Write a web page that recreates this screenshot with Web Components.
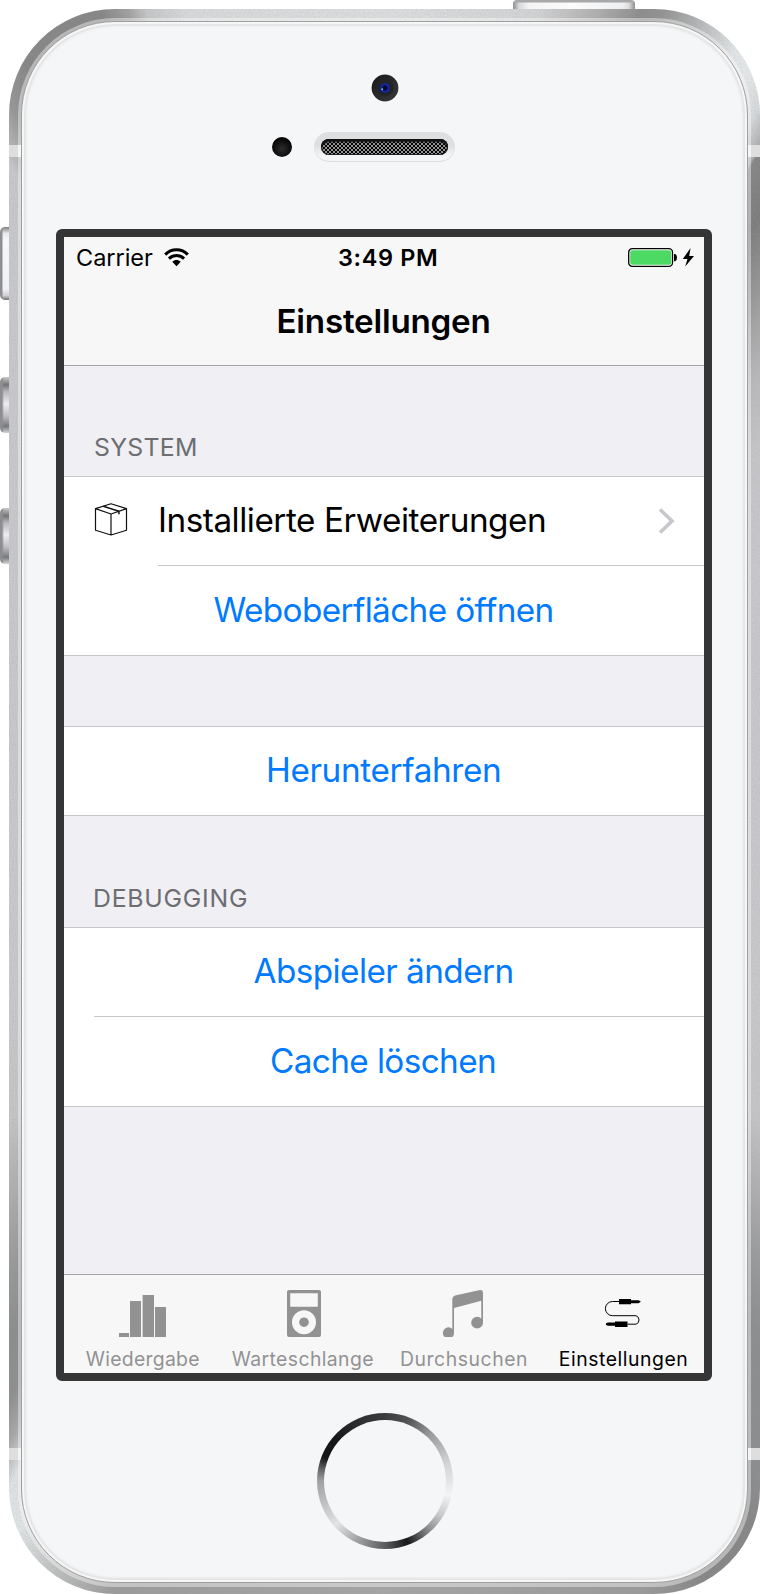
<!DOCTYPE html>
<html lang="de">
<head>
<meta charset="utf-8">
<title>Einstellungen</title>
<style>
html,body{margin:0;background:#fff}
body{width:760px;height:1594px;overflow:hidden;font-family:Inter,"Noto Sans",sans-serif}
</style>
</head>
<body>
<phone-shell>
  <phone-screen>
    <status-bar></status-bar>
    <nav-bar><fit-text width="211">Einstellungen</fit-text></nav-bar>
    <settings-group style="--head:110px">
      <fit-text slot="label" width="101">SYSTEM</fit-text>
      <settings-row kind="link"><fit-text width="385">Installierte Erweiterungen</fit-text></settings-row>
      <settings-row kind="action" style="--inset:94px;--row:90px;--drop:2px;--trim:2px"><fit-text width="339">Weboberfläche öffnen</fit-text></settings-row>
    </settings-group>
    <settings-group style="--head:70px">
      <settings-row kind="action"><fit-text width="232">Herunterfahren</fit-text></settings-row>
    </settings-group>
    <settings-group style="--head:111px">
      <fit-text slot="label" width="151">DEBUGGING</fit-text>
      <settings-row kind="action" style="--trim:2px"><fit-text width="259">Abspieler ändern</fit-text></settings-row>
      <settings-row kind="action" style="--inset:30px;--row:90px;--drop:2px;--trim:2px"><fit-text width="224">Cache löschen</fit-text></settings-row>
    </settings-group>
    <tab-bar slot="tabs">
      <tab-item icon="bars" style="--trim:3px"><fit-text width="113.5">Wiedergabe</fit-text></tab-item>
      <tab-item icon="player" style="--trim:3px"><fit-text width="141.5">Warteschlange</fit-text></tab-item>
      <tab-item icon="note" style="--trim:1px"><fit-text width="125">Durchsuchen</fit-text></tab-item>
      <tab-item icon="cable" style="--trim:2px" active><fit-text width="126.5">Einstellungen</fit-text></tab-item>
    </tab-bar>
  </phone-screen>
</phone-shell>

<script>
class Base extends HTMLElement {
  constructor() {
    super();
    this.attachShadow({ mode: 'open' }).innerHTML = this.template();
  }
  template() { return '<slot></slot>'; }
}

customElements.define('phone-shell', class extends Base {
  template() { return `
  <style>
    :host{display:block;position:relative;width:760px;height:1594px;overflow:hidden;box-sizing:border-box;padding:9px 0 0 9px;background:#fff}
    .body{position:relative;box-sizing:border-box;width:751px;height:1585px;padding:9px 9px 7px;border-radius:106px;overflow:hidden;
      background:conic-gradient(from 0deg at 375.5px 792px,
      #dcddde 0deg,#d2d3d4 11deg,#b0b0b0 15deg,#8c8c8c 18deg,#929292 19.5deg,#b8babb 22.3deg,#e2e5e7 25deg,#e6e9ea 26.6deg,#d6d9db 28.3deg,#acadae 29.8deg,#868686 30deg,#7c7c7c 32.6deg,#8a8a8a 34.5deg,#a5a5a6 38deg,#b9b9bb 41.4deg,#c5c5c8 46.6deg,#c8c8cc 57deg,#c8c8cb 118deg,#c4c4c6 130.4deg,#acacae 136.8deg,#999a9b 140.8deg,#8c8d8f 145deg,#8c8d8f 151deg,#868686 153deg,#868686 157.6deg,#9a9a9a 162deg,#a4a4a4 180deg,#9b9b9b 199deg,#bcbebd 203deg,#e0e4e5 206.6deg,#dee2e4 208.7deg,#bcbdbf 209.7deg,#a8a8aa 210.3deg,#8e8f91 212deg,#8b8c8e 214.8deg,#999a9b 219.2deg,#acacae 223.2deg,#c4c4c6 229.6deg,#c8c8cc 242deg,#c7c7cc 303deg,#c8c8cc 329.5deg,#b0b0b0 330.5deg,#959595 331.8deg,#868686 334deg,#868686 340.3deg,#a0a0a0 342deg,#c4c5c6 343.2deg,#d8d9da 346deg,#dcddde 360deg)}
    .grain{position:absolute;inset:0;width:100%;height:100%}
    .ring{position:relative;box-sizing:border-box;height:100%;padding:3px 3px 4px;border-radius:97px;background:rgba(255,255,255,.4)}
    .face{box-sizing:border-box;height:100%;border:1px solid #9d9fa1;border-radius:94px;background:#f4f6f8;box-shadow:inset 0 0 0 2px #f6f6f7,inset 0 0 0 4px #e6e6e6,inset 0 0 2px 5px #edeef0;
      display:flex;flex-direction:column;align-items:center}
    .top{height:207px;display:flex;flex-direction:column;align-items:center;width:100%}
    .camera{margin:51.5px 0 0}
    .ear{display:flex;margin:30.5px 42px 0 0;gap:22px;align-items:center}
    .sensor{width:20px;height:20px;border-radius:50%;background:radial-gradient(circle at 50% 60%,#2b2b2c,#050505 70%);box-shadow:0 1px 1px #fff}
    .speaker{width:141px;height:30px;border-radius:15px;box-sizing:border-box;padding:7px;background:linear-gradient(#dddfe0 45%,#f4f5f6 80%);box-shadow:inset 0 -1px #dcdddf}
    .mesh{height:16px;border-radius:8px;background:repeating-conic-gradient(#050505 0 25%,#929292 0 50%) 0 0/4px 4px;box-shadow:inset 0 3px 2px #111,inset 0 0 0 1px #222}
    .home{margin-top:32px;width:136px;height:136px;box-sizing:border-box;padding:7px;border-radius:50%;background:conic-gradient(#3b3c3d,#505152 20deg,#9c9c9d 45deg,#d4d5d6 75deg,#e3e4e5 90deg,#f3f4f5 102deg,#c8c9ca 122deg,#8c8d8e 138deg,#171819 160deg,#5b5c5e 180deg,#9b9c9d 203deg,#e2e3e4 228deg,#bfc0c1 250deg,#a0a1a3 270deg,#606163 281deg,#151617 291deg,#151617 310deg,#292a2b 330deg,#3b3c3d)}
    .home i{display:block;height:100%;border-radius:50%;background:#f5f6f8}
    .band{position:absolute;width:12px;height:12px;background:linear-gradient(90deg,#dedede 9px,#f5f5f5 9px)}
    .r{transform:scaleX(-1)}
    .side{position:absolute;left:0;width:9px;box-sizing:border-box;border-radius:5px 0 0 5px}
    .mute{top:227px;height:73px;background:linear-gradient(90deg,#8d8e91 2px,transparent 3px),linear-gradient(#808081,#eaebed 9%,#f6f7f8 20%,#f0f1f3 85%,#d0d0d2 94%,#6f6f70)}
    .vol{height:56px;background:linear-gradient(90deg,#8d8e91 2px,transparent 4px),linear-gradient(#c9c9c9,#747474 14%,#b8b8ba 26%,#ededef 48%,#bfbfc1 70%,#77787a 88%,#d5d5d5)}
    .power{position:absolute;left:513px;top:0;width:122px;height:9px;background:linear-gradient(#a7a8aa 2px,transparent 3px),linear-gradient(90deg,#8e8e8e,#d9dadb 5%,#f4f4f5 13%,#fbfbfb 50%,#eeeff0 90%,#dcdcdc 95%,#8e8e8e);border-radius:4px 4px 0 0}
  </style>
  <div class="body">
    <svg class="grain"><filter id="g"><feTurbulence type="fractalNoise" baseFrequency=".7" numOctaves="2" seed="3"/><feColorMatrix values="0 0 0 0 .35  0 0 0 0 .35  0 0 0 0 .35  1.2 0 0 0 -.5"/></filter><rect width="100%" height="100%" filter="url(#g)" opacity=".45"/></svg>
    <div class="ring"><div class="face">
      <div class="top">
        <svg class="camera" width="28" height="28" viewBox="0 0 28 28"><defs><linearGradient id="c" x2="1" y2="1"><stop stop-color="#161617"/><stop offset=".6" stop-color="#2c2d2f"/><stop offset="1" stop-color="#38393b"/></linearGradient><radialGradient id="b"><stop stop-color="#02030b"/><stop offset=".4" stop-color="#070c45"/><stop offset=".75" stop-color="#1533c0"/><stop offset="1" stop-color="#11151f"/></radialGradient></defs><circle cx="14" cy="15" r="13.4" fill="#fff"/><circle cx="14" cy="14" r="13.4" fill="url(#c)"/><circle cx="14" cy="14" r="8.5" fill="#222426"/><circle cx="14" cy="14" r="5.5" fill="url(#b)"/><circle cx="11.2" cy="15.3" r="1" fill="#8fb0f0"/></svg>
        <div class="ear"><div class="sensor"></div><div class="speaker"><div class="mesh"></div></div></div>
      </div>
      <slot></slot>
      <div class="home"><i></i></div>
    </div></div>
  </div>
  <div class="side mute"></div><div class="side vol" style="top:377px"></div><div class="side vol" style="top:508px"></div>
  <div class="power"></div>
  <div class="band" style="left:9px;top:145px"></div><div class="band" style="left:9px;top:1448px"></div>
  <div class="band r" style="left:748px;top:145px"></div><div class="band r" style="left:748px;top:1448px"></div>`; }
});

customElements.define('phone-screen', class extends Base {
  template() { return `<style>:host{flex:none;display:flex;flex-direction:column;box-sizing:border-box;width:656px;height:1152px;margin-right:1px;border:8px solid #353535;border-radius:6px;background:linear-gradient(#353535,#353535) border-box;}
  main{flex:1;display:flex;flex-direction:column;background:#efeff4}</style><main><slot></slot></main><slot name="tabs"></slot>`; }
});

customElements.define('status-bar', class extends Base {
  template() { return `<style>
    :host{display:grid;grid-template-columns:275px 1fr 76px;align-items:center;height:40px;background:#f7f7f7;font-size:23.5px;color:#000;box-sizing:border-box;padding-top:1px}
    .l{display:flex;align-items:center;padding-left:13px;gap:11px}
    .t{font-weight:600}
    fit-text{padding-top:2px}
    svg{display:block}
  </style>
  <div class="l"><fit-text width="76">Carrier</fit-text>
    <svg width="25" height="19" viewBox="0 0 25 19"><g fill="none" stroke="#000" stroke-width="3"><path d="M1.2 6.6C7.5.2 17.5.2 23.8 6.6"/><path d="M4.9 10.6C9.2 6.5 15.8 6.5 20.1 10.6"/></g><path d="M8.3 13.7C10.7 11.5 14.3 11.5 16.7 13.7L12.5 18.2Z"/></svg></div>
  <div class="t"><fit-text width="97">3:49 PM</fit-text></div>
  <svg width="70" height="20" viewBox="0 0 70 20"><rect x=".7" y=".7" width="43.8" height="17.6" rx="3.6" fill="#fbfffb" stroke="#000" stroke-width="1.3"/><rect x="2.2" y="2.2" width="41" height="14.6" rx="2" fill="#4cd964"/><path d="M46 5.9h1.2Q49 7 49 9.5t-1.8 3.8H46Z"/><path d="M62.6 0 54.8 11h4.7L57.2 18.5 66 8h-4.8Z"/></svg>`; }
});

customElements.define('nav-bar', class extends Base {
  template() { return '<style>:host{display:flex;height:89px;box-sizing:border-box;padding-top:2px;border-bottom:1px solid #a6a6aa;background:#f7f7f7;justify-content:center;align-items:center;font-size:33.2px;font-weight:600;color:#000}</style><slot></slot>'; }
});

customElements.define('settings-group', class extends Base {
  template() { return `<style>:host{display:block;flex:none}
    header{height:var(--head);box-sizing:border-box;display:flex;align-items:flex-end;padding:0 0 13px 31px;font-size:24.8px;color:#6d6d72}
    section{background:#fff;border-top:1px solid #c8c7cc;border-bottom:1px solid #c8c7cc}
  </style><header><slot name="label"></slot></header><section><slot></slot></section>`; }
});

customElements.define('settings-row', class extends Base {
  template() { return `<style>
    :host{display:flex;align-items:center;box-sizing:border-box;height:var(--row,88px);padding:var(--drop,0) var(--trim,0) 0 0;font-size:33.3px;background:linear-gradient(#c8c7cc,#c8c7cc) var(--inset,640px) 0/640px 1px no-repeat}
    :host([kind=action]){justify-content:center;color:#007aff}
    :host([kind=action]) svg{display:none}
    .box{margin:0 32px 5px 30px;flex:none}.chev{margin:0 29px 0 auto;flex:none}
  </style>
  <svg class="box" width="34" height="34" viewBox="0 0 34 34" fill="none" stroke="#111" stroke-width="1.2" stroke-linejoin="round"><path d="M17 1.7 32.5 6.6V28.2L17 33 1.5 28.2V6.6ZM1.5 6.6 17 12 32.5 6.6M17 12V33"/><path d="M9.3 4.2 24.9 9.3V12.2" stroke-width="1.5"/></svg>
  <slot></slot>
  <svg class="chev" width="17" height="28" viewBox="0 0 17 28"><path d="M2 2.5 14 14 2 25.5" fill="none" stroke="#c7c7cc" stroke-width="3.6"/></svg>`; }
});

customElements.define('tab-bar', class extends Base {
  template() { return '<style>:host{display:grid;grid-template-columns:repeat(4,160px);height:99px;box-sizing:border-box;border-top:1px solid #a6a6aa;background:#f7f7f8}</style><slot></slot>'; }
});

const ICONS = {
  bars: '<path d="M55 58H65V62H55ZM66 26H77V62H66ZM78.6 20H90V62H78.6ZM91 32H102V62H91Z"/>',
  player: '<path fill-rule="evenodd" d="M65 15H95Q97 15 97 17V60Q97 62 95 62H65Q63 62 63 60V17Q63 15 65 15ZM66.2 18.2V31.8H93.8V18.2ZM80 35.2A12 12 0 1 0 80 59.2 12 12 0 1 0 80 35.2Z"/><circle cx="80" cy="47.2" r="4.8"/>',
  note: '<path d="M68.3 57V24Q68.3 21.5 71 20.5L95 15.2Q99 14.2 99 18V48H97.3V25.7L70 33V57Z"/><path d="M70 57.3A5.6 5.6 0 1 0 60.6 62H68.4A5.5 5.5 0 0 0 70 57.3Z"/><circle cx="93.1" cy="47.7" r="5.9"/>',
  cable: '<path d="M75.5 26.5H68.5A7 7 0 0 0 68.5 40.7H92A4.5 4.5 0 0 1 92 49.2H83.5" fill="none" stroke="currentColor"/><path d="M75 24H87V25.2H94.5L96.5 26.2V27L94.5 28.2H87V29.2H75ZM71 46.4H83.5V52H71V50.8H64L62 50V48.2L64 47.4H71Z"/>'
};
customElements.define('tab-item', class extends Base {
  template() { return `<style>
    :host{display:flex;flex-direction:column;align-items:center;color:#929292;font-size:19.4px}
    :host([active]){color:#000}
    svg{display:block;flex:none;margin-bottom:7px}
    div{padding-right:var(--trim,0)}
  </style><svg width="160" height="66" viewBox="0 0 160 66" fill="currentColor"></svg><div><slot></slot></div>`; }
  connectedCallback() {
    this.shadowRoot.querySelector('svg').innerHTML = ICONS[this.getAttribute('icon')];
  }
});

/* Text whose tracking is set so that its ink spans the given width.
   Defined last: it measures with the font size its container gives it. */
customElements.define('fit-text', class extends Base {
  template() { return '<style>:host{display:block;flex:none;white-space:nowrap;height:1.2em;line-height:1.2em}span{display:block}</style><span><slot></slot></span>'; }
  connectedCallback() {
    const width = Number(this.getAttribute('width'));
    const style = getComputedStyle(this);
    const ctx = document.createElement('canvas').getContext('2d');
    const text = this.textContent;
    ctx.font = `${style.fontWeight} ${style.fontSize} ${style.fontFamily}`;
    const m = ctx.measureText(text);
    const ink = m.actualBoundingBoxLeft + m.actualBoundingBoxRight;
    this.style.width = width + 'px';
    const span = this.shadowRoot.querySelector('span');
    span.style.letterSpacing = (width - ink) / (text.length - 1) + 'px';
    span.style.marginLeft = m.actualBoundingBoxLeft + 'px';
  }
});
</script>
</body>
</html>
